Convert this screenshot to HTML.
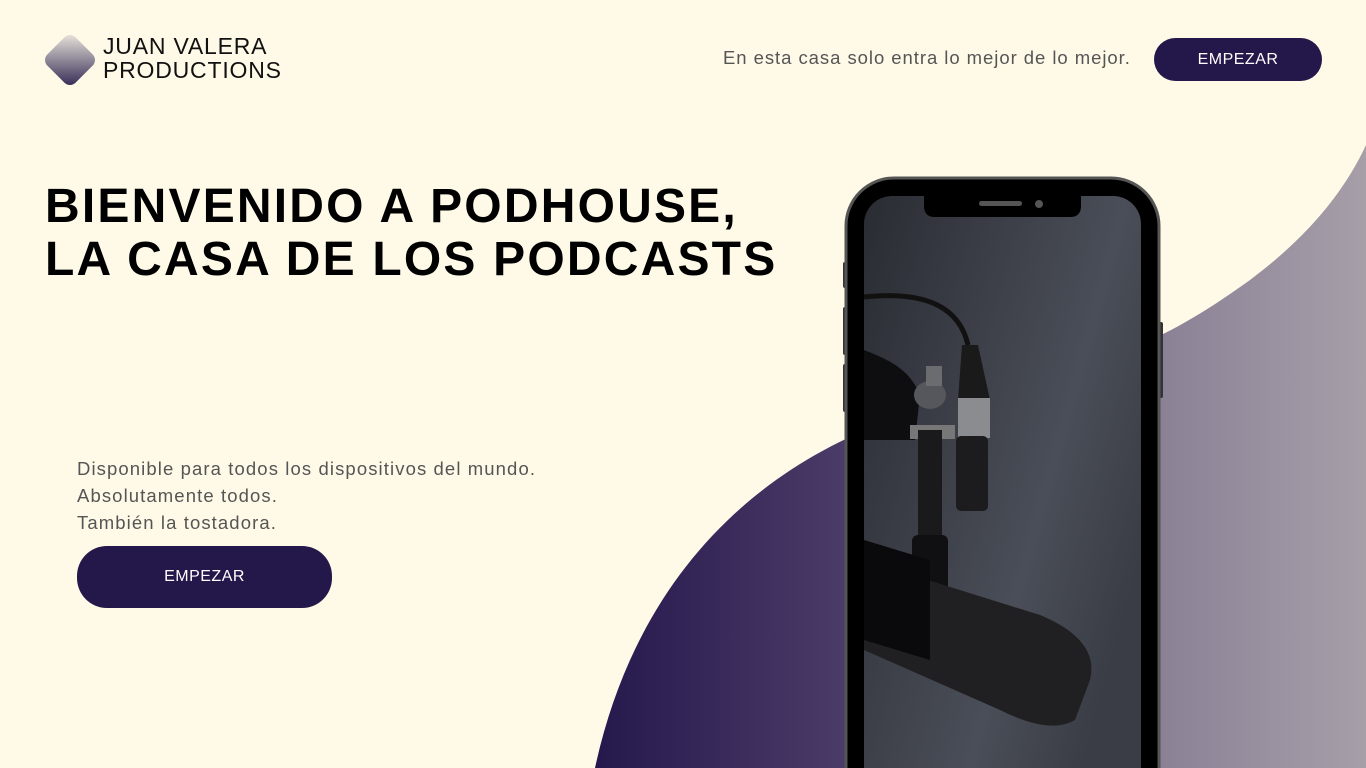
<!DOCTYPE html>
<html><head><meta charset="utf-8"><style>
html,body{margin:0;width:1366px;height:768px;overflow:hidden}
body{background:#fffae8;font-family:"Liberation Sans",sans-serif;position:relative}
.a{position:absolute}
.btn{background:#24174a;color:#fff;border-radius:30px;display:flex;align-items:center;justify-content:center;font-size:16px;letter-spacing:0.5px}
</style></head><body>
<svg class="a" style="left:0;top:0" width="1366" height="768">
<defs>
<linearGradient id="g" x1="595" x2="1366" y1="0" y2="0" gradientUnits="userSpaceOnUse">
<stop offset="0" stop-color="#25184c"/><stop offset="0.35" stop-color="#4e3e6a"/><stop offset="0.75" stop-color="#8c8397"/><stop offset="1" stop-color="#a69fa8"/></linearGradient>
<linearGradient id="lg" x1="0" y1="0" x2="1" y2="1"><stop offset="0" stop-color="#f0ece0"/><stop offset="1" stop-color="#2e2450"/></linearGradient>
<linearGradient id="sc" x1="0" y1="0" x2="1" y2="0.6"><stop offset="0" stop-color="#2a2c33"/><stop offset="0.7" stop-color="#4a4e58"/><stop offset="1" stop-color="#3a3d45"/></linearGradient>
</defs>
<path d="M595 768 C640 560 780 440 960 400 C1120 365 1180 330 1250 280 C1310 235 1345 190 1366 145 L1366 768 Z" fill="url(#g)"/>
<rect x="50" y="40" width="40" height="40" rx="8" transform="rotate(45 70 60)" fill="url(#lg)"/>
<rect x="843" y="262" width="5" height="26" rx="2" fill="#333"/>
<rect x="843" y="307" width="5" height="48" rx="2" fill="#333"/>
<rect x="843" y="364" width="5" height="48" rx="2" fill="#333"/>
<rect x="1158" y="322" width="5" height="76" rx="2" fill="#333"/>
<rect x="846" y="178" width="313" height="640" rx="48" fill="#000" stroke="#555" stroke-width="3"/>
<rect x="864" y="196" width="277" height="600" rx="28" fill="url(#sc)"/>
<path d="M924 196 H1081 V206 Q1081 217 1070 217 H935 Q924 217 924 206 Z" fill="#000"/>
<rect x="979" y="201" width="43" height="5" rx="2.5" fill="#555"/>
<circle cx="1039" cy="204" r="4" fill="#555"/>
<g>
<path d="M864 297 C930 290 960 310 968 345" stroke="#111" stroke-width="5" fill="none"/>
<path d="M962 345 L978 345 L990 400 L958 400 Z" fill="#1a1a1a"/>
<rect x="958" y="398" width="32" height="40" fill="#8a8c90"/>
<rect x="956" y="436" width="32" height="75" rx="5" fill="#1c1c1e"/>
<path d="M864 350 C890 360 910 370 920 395 L915 440 L864 440 Z" fill="#0e0e10"/>
<ellipse cx="930" cy="395" rx="16" ry="14" fill="#55575c"/>
<rect x="926" y="366" width="16" height="20" fill="#6a6c70"/>
<rect x="910" y="425" width="45" height="14" fill="#777"/>
<rect x="918" y="430" width="24" height="120" fill="#1a1a1c"/>
<rect x="912" y="535" width="36" height="80" rx="6" fill="#101012"/>
<path d="M864 560 L1040 615 Q1100 640 1090 680 L1075 720 Q1050 735 1000 710 L864 650 Z" fill="#202022"/>
<path d="M864 540 L930 560 L930 660 L864 640 Z" fill="#0a0a0c"/>
</g>
</svg>
<div class="a" style="left:103px;top:34px;font-size:23px;line-height:24px;color:#111;letter-spacing:0.8px">JUAN VALERA<br>PRODUCTIONS</div>
<div class="a" style="left:723px;top:47px;font-size:18.5px;color:#555;letter-spacing:0.95px;white-space:nowrap">En esta casa solo entra lo mejor de lo mejor.</div>
<div class="a btn" style="left:1154px;top:38px;width:168px;height:43px">EMPEZAR</div>
<div class="a" style="left:45px;top:180px;font-size:48px;line-height:53px;font-weight:bold;color:#000;letter-spacing:2.2px;white-space:nowrap">BIENVENIDO A PODHOUSE,<br>LA CASA DE LOS PODCASTS</div>
<div class="a" style="left:77px;top:455px;font-size:18.5px;line-height:27px;color:#555;letter-spacing:1.1px;white-space:nowrap">Disponible para todos los dispositivos del mundo.<br>Absolutamente todos.<br>También la tostadora.</div>
<div class="a btn" style="left:77px;top:546px;width:255px;height:62px">EMPEZAR</div>
</body></html>
